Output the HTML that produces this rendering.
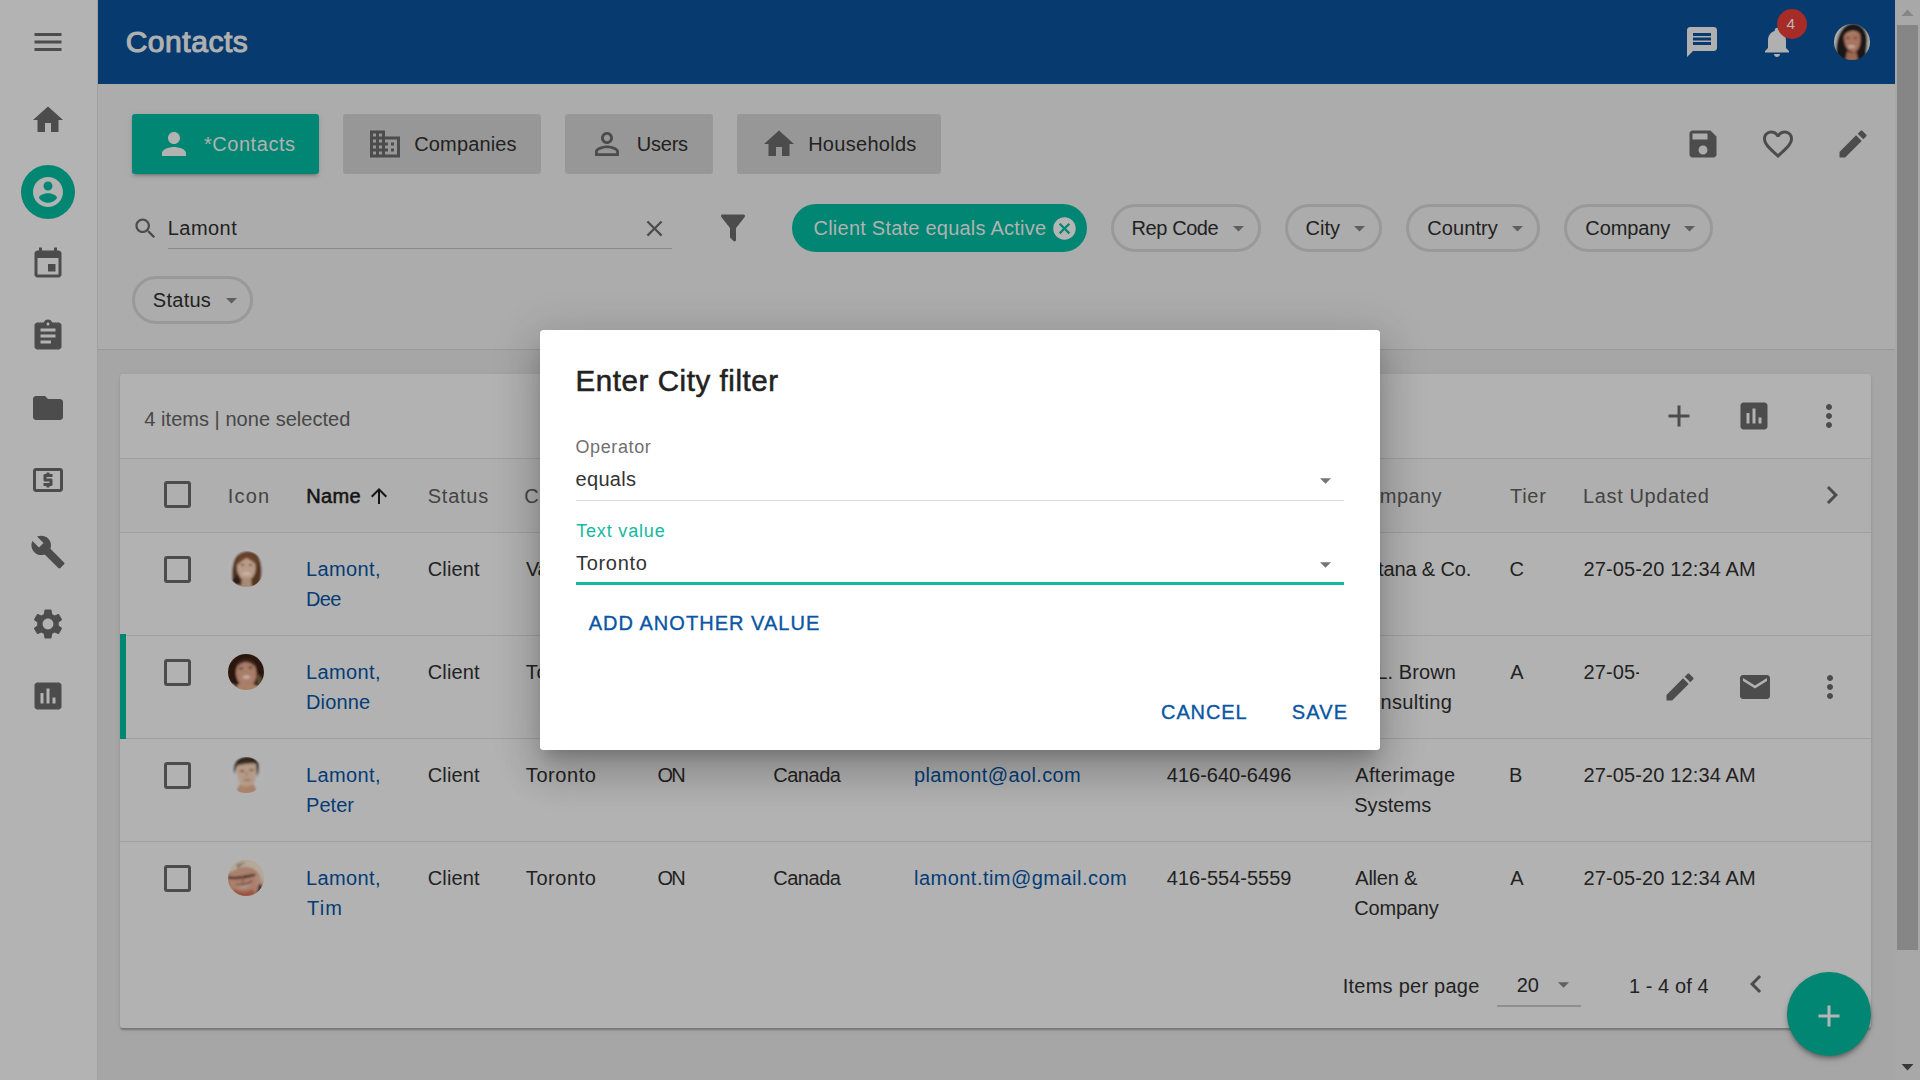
<!DOCTYPE html>
<html lang="en"><head><meta charset="utf-8"><title>Contacts</title>
<style>
html,body{margin:0;padding:0;}
body{width:1920px;height:1080px;overflow:hidden;position:relative;background:#a6a6a6;font-family:"Liberation Sans",sans-serif;}
.b{position:absolute;}
.ic{position:absolute;display:block;overflow:visible;}
.t{position:absolute;white-space:nowrap;}
</style></head><body>
<div class="b" style="left:0px;top:0px;width:96.5px;height:1080px;background:#b3b3b3;border-right:1.5px solid #a0a0a0;"></div>
<svg class="ic" style="left:30px;top:24px;width:36px;height:36px;" viewBox="0 0 24 24"><path fill="#4c4c4c" d="M3 18h18v-2H3v2zm0-5h18v-2H3v2zm0-7v2h18V6H3z"/></svg>
<svg class="ic" style="left:30px;top:102px;width:36px;height:36px;" viewBox="0 0 24 24"><path fill="#4c4c4c" d="M10 20v-6h4v6h5v-8h3L12 3 2 12h3v8z"/></svg>
<div class="b" style="left:21px;top:165px;width:54px;height:54px;background:#008672;border-radius:50%;"></div>
<svg class="ic" style="left:30px;top:174px;width:36px;height:36px;" viewBox="0 0 24 24"><path fill="#b2b2b2" d="M12 2C6.48 2 2 6.48 2 12s4.48 10 10 10 10-4.48 10-10S17.52 2 12 2zm0 3c1.66 0 3 1.34 3 3s-1.34 3-3 3-3-1.34-3-3 1.34-3 3-3zm0 14.2c-2.5 0-4.71-1.28-6-3.22.03-1.99 4-3.08 6-3.08 1.99 0 5.97 1.09 6 3.08-1.29 1.94-3.5 3.22-6 3.22z"/></svg>
<svg class="ic" style="left:30px;top:246px;width:36px;height:36px;" viewBox="0 0 24 24"><path fill="#4c4c4c" d="M17 12h-5v5h5v-5zM16 1v2H8V1H6v2H5c-1.11 0-1.99.9-1.99 2L3 19c0 1.1.89 2 2 2h14c1.1 0 2-.9 2-2V5c0-1.1-.9-2-2-2h-1V1h-2zm3 18H5V8h14v11z"/></svg>
<svg class="ic" style="left:30px;top:318px;width:36px;height:36px;" viewBox="0 0 24 24"><path fill="#4c4c4c" d="M19 3h-4.18C14.4 1.84 13.3 1 12 1c-1.3 0-2.4.84-2.82 2H5c-1.1 0-2 .9-2 2v14c0 1.1.9 2 2 2h14c1.1 0 2-.9 2-2V5c0-1.1-.9-2-2-2zm-7 0c.55 0 1 .45 1 1s-.45 1-1 1-1-.45-1-1 .45-1 1-1zm2 14H7v-2h7v2zm3-4H7v-2h10v2zm0-4H7V7h10v2z"/></svg>
<svg class="ic" style="left:30px;top:390px;width:36px;height:36px;" viewBox="0 0 24 24"><path fill="#4c4c4c" d="M10 4H4c-1.1 0-1.99.9-1.99 2L2 18c0 1.1.9 2 2 2h16c1.1 0 2-.9 2-2V8c0-1.1-.9-2-2-2h-8l-2-2z"/></svg>
<svg class="ic" style="left:30px;top:462px;width:36px;height:36px;" viewBox="0 0 24 24"><path fill="#4c4c4c" d="M11 17h2v-1h1c.55 0 1-.45 1-1v-3c0-.55-.45-1-1-1h-3v-1h4V8h-2V7h-2v1h-1c-.55 0-1 .45-1 1v3c0 .55.45 1 1 1h3v1H9v2h2v1zm9-13H4c-1.11 0-1.99.89-1.99 2L2 18c0 1.11.89 2 2 2h16c1.11 0 2-.89 2-2V6c0-1.11-.89-2-2-2zm0 14H4V6h16v12z"/></svg>
<svg class="ic" style="left:30px;top:534px;width:36px;height:36px;" viewBox="0 0 24 24"><path fill="#4c4c4c" d="M22.7 19l-9.1-9.1c.9-2.3.4-5-1.5-6.9-2-2-5-2.4-7.4-1.3L9 6 6 9 1.6 4.7C.4 7.1.9 10.1 2.9 12.1c1.9 1.9 4.6 2.4 6.9 1.5l9.1 9.1c.4.4 1 .4 1.4 0l2.3-2.3c.5-.4.5-1.1.1-1.4z"/></svg>
<svg class="ic" style="left:30px;top:606px;width:36px;height:36px;" viewBox="0 0 24 24"><path fill="#4c4c4c" d="M19.14 12.94c.04-.3.06-.61.06-.94 0-.32-.02-.64-.07-.94l2.03-1.58c.18-.14.23-.41.12-.61l-1.92-3.32c-.12-.22-.37-.29-.59-.22l-2.39.96c-.5-.38-1.03-.7-1.62-.94l-.36-2.54c-.04-.24-.24-.41-.48-.41h-3.84c-.24 0-.43.17-.47.41l-.36 2.54c-.59.24-1.13.57-1.62.94l-2.39-.96c-.22-.08-.47 0-.59.22L2.74 8.87c-.12.21-.08.47.12.61l2.03 1.58c-.05.3-.09.63-.09.94s.02.64.07.94l-2.03 1.58c-.18.14-.23.41-.12.61l1.92 3.32c.12.22.37.29.59.22l2.39-.96c.5.38 1.03.7 1.62.94l.36 2.54c.05.24.24.41.48.41h3.84c.24 0 .44-.17.47-.41l.36-2.54c.59-.24 1.13-.56 1.62-.94l2.39.96c.22.08.47 0 .59-.22l1.92-3.32c.12-.22.07-.47-.12-.61l-2.01-1.58zM12 15.6c-1.98 0-3.6-1.62-3.6-3.6s1.62-3.6 3.6-3.6 3.6 1.62 3.6 3.6-1.62 3.6-3.6 3.6z"/></svg>
<svg class="ic" style="left:30px;top:678px;width:36px;height:36px;" viewBox="0 0 24 24"><path fill="#4c4c4c" d="M19 3H5c-1.1 0-2 .9-2 2v14c0 1.1.9 2 2 2h14c1.1 0 2-.9 2-2V5c0-1.1-.9-2-2-2zM9 17H7v-7h2v7zm4 0h-2V7h2v10zm4 0h-2v-4h2v4z"/></svg>
<div class="b" style="left:98px;top:84px;width:1797px;height:265px;background:#acacac;"></div>
<div class="b" style="left:98px;top:0px;width:1797px;height:84px;background:#073b6f;"></div>
<span class="t" id="t0" style="left:125.66px;top:19.11px;font-size:30px;line-height:45px;color:#b0b0b0;letter-spacing:0.539px;-webkit-text-stroke:1.1px #b0b0b0;">Contacts</span>
<svg class="ic" style="left:1683.7px;top:24px;width:36px;height:36px;" viewBox="0 0 24 24"><path fill="#b0b0b0" d="M20 2H4c-1.1 0-1.99.9-1.99 2L2 22l4-4h14c1.1 0 2-.9 2-2V4c0-1.1-.9-2-2-2zm-2 12H6v-2h12v2zm0-3H6V9h12v2zm0-3H6V6h12v2z"/></svg>
<svg class="ic" style="left:1758.5px;top:24px;width:36px;height:36px;" viewBox="0 0 24 24"><path fill="#b0b0b0" d="M12 22c1.1 0 2-.9 2-2h-4c0 1.1.89 2 2 2zm6-6v-5c0-3.07-1.64-5.64-4.5-6.32V4c0-.83-.67-1.5-1.5-1.5s-1.5.67-1.5 1.5v.68C7.63 5.36 6 7.92 6 11v5l-2 2v1h16v-1l-2-2z"/></svg>
<div class="b" style="left:1777px;top:9px;width:30px;height:30px;background:#a72b27;border-radius:50%;"></div>
<span class="t" id="t1" style="left:1786.45px;top:12.13px;font-size:15.5px;line-height:23px;color:#b8b8b8;">4</span>
<svg class="ic" style="left:1834px;top:23.9px;width:36px;height:36px" viewBox="0 0 36 36"><defs><clipPath id="cA"><circle cx="18" cy="18" r="18"/></clipPath></defs><g clip-path="url(#cA)"><g filter="url(#bl)"><rect x="-4" y="-4" width="44" height="44" fill="#b2b0a8"/><path d="M4.500 40C0 27 2 9 12 1.500c8-5 18-1 20.500 9 2 8-1 15 0 20l-4 10z" fill="#1b1414"/><path d="M10.500 10c2-6 12-7 15-1 2 6 1 14-3 18-3 2-7 1-9-2-3-4-4-10-3-15z" fill="#a8755e"/><path d="M13 7c4-2 9-1 11 2-4-1-8-1-11 2z" fill="#b88c78"/><path d="M9 12c1-8 14-11 18-1-4-5-11-6-18 1z" fill="#1b1414"/><path d="M13 27c2 2 7 2 9 0l3 13H11z" fill="#9c6852"/><ellipse cx="17.500" cy="22.500" rx="3.500" ry="1.300" fill="#c8b0a6"/><ellipse cx="14" cy="14" rx="1.800" ry=".8" fill="#3a2620"/><ellipse cx="21.500" cy="14" rx="1.800" ry=".8" fill="#3a2620"/></g></g></svg>
<div class="b" style="left:132px;top:114px;width:187px;height:60px;background:#008672;border-radius:3px;box-shadow:0 4.5px 1.5px -3px rgba(0,0,0,.13),0 3px 3px 0 rgba(0,0,0,.09),0 1.5px 7.5px 0 rgba(0,0,0,.08);"></div>
<svg class="ic" style="left:156.25px;top:126px;width:36px;height:36px;" viewBox="0 0 24 24"><path fill="#b2b2b2" d="M12 12c2.21 0 4-1.79 4-4s-1.79-4-4-4-4 1.79-4 4 1.79 4 4 4zm0 2c-2.67 0-8 1.34-8 4v2h16v-2c0-2.66-5.33-4-8-4z"/></svg>
<span class="t" id="t2" style="left:203.92px;top:128.87px;font-size:20px;line-height:30px;color:#b2b2b2;letter-spacing:0.555px;">*Contacts</span>
<div class="b" style="left:343px;top:114px;width:198px;height:60px;background:#979797;border-radius:3px;"></div>
<svg class="ic" style="left:366.5px;top:126px;width:36px;height:36px;" viewBox="0 0 24 24"><path fill="#4c4c4c" d="M12 7V3H2v18h20V7H12zM6 19H4v-2h2v2zm0-4H4v-2h2v2zm0-4H4V9h2v2zm0-4H4V5h2v2zm4 12H8v-2h2v2zm0-4H8v-2h2v2zm0-4H8V9h2v2zm0-4H8V5h2v2zm10 12h-8v-2h2v-2h-2v-2h2v-2h-2V9h8v10zm-2-8h-2v2h2v-2zm0 4h-2v2h2v-2z"/></svg>
<span class="t" id="t3" style="left:414.25px;top:128.87px;font-size:20px;line-height:30px;color:#222;letter-spacing:0.150px;">Companies</span>
<div class="b" style="left:565px;top:114px;width:148px;height:60px;background:#979797;border-radius:3px;"></div>
<svg class="ic" style="left:588.5px;top:126px;width:36px;height:36px;" viewBox="0 0 24 24"><path fill="#4c4c4c" d="M12 5.9c1.16 0 2.1.94 2.1 2.1s-.94 2.1-2.1 2.1S9.9 9.16 9.9 8s.94-2.1 2.1-2.1m0 9c2.97 0 6.1 1.46 6.1 2.1v1.1H5.9V17c0-.64 3.13-2.1 6.1-2.1M12 4C9.79 4 8 5.79 8 8s1.79 4 4 4 4-1.79 4-4-1.79-4-4-4zm0 9c-2.67 0-8 1.34-8 4v3h16v-3c0-2.66-5.33-4-8-4z"/></svg>
<span class="t" id="t4" style="left:636.87px;top:128.87px;font-size:20px;line-height:30px;color:#222;letter-spacing:-0.259px;">Users</span>
<div class="b" style="left:737px;top:114px;width:204px;height:60px;background:#979797;border-radius:3px;"></div>
<svg class="ic" style="left:761px;top:126px;width:36px;height:36px;" viewBox="0 0 24 24"><path fill="#4c4c4c" d="M10 20v-6h4v6h5v-8h3L12 3 2 12h3v8z"/></svg>
<span class="t" id="t5" style="left:808.15px;top:128.87px;font-size:20px;line-height:30px;color:#222;letter-spacing:0.288px;">Households</span>
<svg class="ic" style="left:1685px;top:126px;width:36px;height:36px;" viewBox="0 0 24 24"><path fill="#4c4c4c" d="M17 3H5c-1.11 0-2 .9-2 2v14c0 1.1.89 2 2 2h14c1.1 0 2-.9 2-2V7l-4-4zm-5 16c-1.66 0-3-1.34-3-3s1.34-3 3-3 3 1.34 3 3-1.34 3-3 3zm3-10H5V5h10v4z"/></svg>
<svg class="ic" style="left:1760px;top:126px;width:36px;height:36px;" viewBox="0 0 24 24"><path fill="#4c4c4c" d="M16.5 3c-1.74 0-3.41.81-4.5 2.09C10.91 3.81 9.24 3 7.5 3 4.42 3 2 5.42 2 8.5c0 3.78 3.4 6.86 8.55 11.54L12 21.35l1.45-1.32C18.6 15.36 22 12.28 22 8.5 22 5.42 19.58 3 16.5 3zm-4.4 15.55l-.1.1-.1-.1C7.14 14.24 4 11.39 4 8.5 4 6.5 5.5 5 7.5 5c1.54 0 3.04.99 3.57 2.36h1.87C13.46 5.99 14.96 5 16.5 5c2 0 3.5 1.5 3.5 3.5 0 2.89-3.14 5.74-7.9 10.05z"/></svg>
<svg class="ic" style="left:1835.3px;top:126px;width:36px;height:36px;" viewBox="0 0 24 24"><path fill="#4c4c4c" d="M3 17.25V21h3.75L17.81 9.94l-3.75-3.75L3 17.25zM20.71 7.04c.39-.39.39-1.02 0-1.41l-2.34-2.34c-.39-.39-1.02-.39-1.41 0l-1.83 1.83 3.75 3.75 1.83-1.83z"/></svg>
<svg class="ic" style="left:131.7px;top:214.9px;width:27px;height:27px;" viewBox="0 0 24 24"><path fill="#4c4c4c" d="M15.5 14h-.79l-.28-.27C15.41 12.59 16 11.11 16 9.5 16 5.91 13.09 3 9.5 3S3 5.91 3 9.5 5.91 16 9.5 16c1.61 0 3.09-.59 4.23-1.57l.27.28v.79l5 4.99L20.49 19l-4.99-5zm-6 0C7.01 14 5 11.99 5 9.5S7.01 5 9.5 5 14 7.01 14 9.5 11.99 14 9.5 14z"/></svg>
<span class="t" id="t6" style="left:167.75px;top:212.57px;font-size:20px;line-height:30px;color:#222;letter-spacing:0.446px;">Lamont</span>
<div class="b" style="left:168px;top:247.5px;width:504px;height:1.5px;background:#8a8a8a;"></div>
<svg class="ic" style="left:640.5px;top:215px;width:27px;height:27px;" viewBox="0 0 24 24"><path fill="#4c4c4c" d="M19 6.41L17.59 5 12 10.59 6.41 5 5 6.41 10.59 12 5 17.59 6.41 19 12 13.41 17.59 19 19 17.59 13.41 12z"/></svg>
<svg class="ic" style="left:715px;top:210px;width:36px;height:36px;" viewBox="0 0 24 24"><path fill="#4c4c4c" d="M14,12V19.88C14.04,20.18 13.94,20.5 13.71,20.71C13.32,21.1 12.69,21.1 12.3,20.71L10.29,18.7C10.06,18.47 9.96,18.16 10,17.87V12H9.97L4.21,4.62C3.87,4.19 3.95,3.56 4.38,3.22C4.57,3.08 4.78,3 5,3V3H19V3C19.22,3 19.43,3.08 19.62,3.22C20.05,3.56 20.13,4.19 19.79,4.62L14.03,12H14Z"/></svg>
<div class="b" style="left:792px;top:204px;width:295px;height:48px;background:#008672;border-radius:24px;"></div>
<span class="t" id="t7" style="left:813.51px;top:213.07px;font-size:20px;line-height:30px;color:#b2b2b2;letter-spacing:0.231px;">Client State equals Active</span>
<svg class="ic" style="left:1051.1px;top:215px;width:27px;height:27px;" viewBox="0 0 24 24"><path fill="#b5b5b5" d="M12 2C6.47 2 2 6.47 2 12s4.47 10 10 10 10-4.47 10-10S17.53 2 12 2zm5 13.59L15.59 17 12 13.41 8.41 17 7 15.59 10.59 12 7 8.41 8.41 7 12 10.59 15.59 7 17 8.41 13.41 12 17 15.59z"/></svg>
<div class="b" style="left:1111px;top:204px;width:150px;height:48px;border:3px solid #999;border-radius:24px;box-sizing:border-box;"></div><span class="t" id="t8" style="left:1131.56px;top:213.07px;font-size:20px;line-height:30px;color:#222;letter-spacing:-0.416px;">Rep Code</span><svg class="ic" style="left:1232.9px;top:226px;width:11px;height:5.500px" viewBox="0 0 10 5"><path d="M0 0l5 5 5-5z" fill="#5f5f5f"/></svg>
<div class="b" style="left:1285px;top:204px;width:96.5px;height:48px;border:3px solid #999;border-radius:24px;box-sizing:border-box;"></div><span class="t" id="t9" style="left:1305.62px;top:213.07px;font-size:20px;line-height:30px;color:#222;letter-spacing:-0.009px;">City</span><svg class="ic" style="left:1354.3px;top:226px;width:11px;height:5.500px" viewBox="0 0 10 5"><path d="M0 0l5 5 5-5z" fill="#5f5f5f"/></svg>
<div class="b" style="left:1406px;top:204px;width:133.5px;height:48px;border:3px solid #999;border-radius:24px;box-sizing:border-box;"></div><span class="t" id="t10" style="left:1427.37px;top:213.07px;font-size:20px;line-height:30px;color:#222;letter-spacing:0.062px;">Country</span><svg class="ic" style="left:1512.3px;top:226px;width:11px;height:5.500px" viewBox="0 0 10 5"><path d="M0 0l5 5 5-5z" fill="#5f5f5f"/></svg>
<div class="b" style="left:1564px;top:204px;width:149px;height:48px;border:3px solid #999;border-radius:24px;box-sizing:border-box;"></div><span class="t" id="t11" style="left:1585.37px;top:213.07px;font-size:20px;line-height:30px;color:#222;letter-spacing:-0.132px;">Company</span><svg class="ic" style="left:1684.3px;top:226px;width:11px;height:5.500px" viewBox="0 0 10 5"><path d="M0 0l5 5 5-5z" fill="#5f5f5f"/></svg>
<div class="b" style="left:132px;top:276px;width:120.5px;height:48px;border:3px solid #999;border-radius:24px;box-sizing:border-box;"></div><span class="t" id="t12" style="left:152.86px;top:285.07px;font-size:20px;line-height:30px;color:#222;letter-spacing:0.250px;">Status</span><svg class="ic" style="left:225.5px;top:298px;width:11px;height:5.500px" viewBox="0 0 10 5"><path d="M0 0l5 5 5-5z" fill="#5f5f5f"/></svg>
<div class="b" style="left:98px;top:348.5px;width:1797px;height:1.5px;background:#989898;"></div>
<div class="b" style="left:120px;top:374px;width:1751px;height:654px;background:#b2b2b2;border-radius:3px;box-shadow:0 3px 1.5px -1.5px rgba(0,0,0,.14),0 1.5px 1.5px 0 rgba(0,0,0,.1),0 1.5px 4.5px 0 rgba(0,0,0,.08);"></div>
<span class="t" id="t13" style="left:144.33px;top:403.57px;font-size:20px;line-height:30px;color:#474747;letter-spacing:0.032px;">4 items | none selected</span>
<svg class="ic" style="left:1661px;top:398px;width:36px;height:36px;" viewBox="0 0 24 24"><path fill="#4c4c4c" d="M19 13h-6v6h-2v-6H5v-2h6V5h2v6h6v2z"/></svg>
<svg class="ic" style="left:1736px;top:398px;width:36px;height:36px;" viewBox="0 0 24 24"><path fill="#4c4c4c" d="M19 3H5c-1.1 0-2 .9-2 2v14c0 1.1.9 2 2 2h14c1.1 0 2-.9 2-2V5c0-1.1-.9-2-2-2zM9 17H7v-7h2v7zm4 0h-2V7h2v10zm4 0h-2v-4h2v4z"/></svg>
<svg class="ic" style="left:1811px;top:398px;width:36px;height:36px;" viewBox="0 0 24 24"><path fill="#4c4c4c" d="M12 8c1.1 0 2-.9 2-2s-.9-2-2-2-2 .9-2 2 .9 2 2 2zm0 2c-1.1 0-2 .9-2 2s.9 2 2 2 2-.9 2-2-.9-2-2-2zm0 6c-1.1 0-2 .9-2 2s.9 2 2 2 2-.9 2-2-.9-2-2-2z"/></svg>
<div class="b" style="left:120px;top:459px;width:1751px;height:73px;background:#afafaf;"></div>
<div class="b" style="left:120px;top:458px;width:1751px;height:1px;background:#9f9f9f;"></div>
<div class="b" style="left:120px;top:532px;width:1751px;height:1px;background:#9f9f9f;"></div>
<div class="b" style="left:120px;top:635px;width:1751px;height:1px;background:#9f9f9f;"></div>
<div class="b" style="left:120px;top:738px;width:1751px;height:1px;background:#9f9f9f;"></div>
<div class="b" style="left:120px;top:841px;width:1751px;height:1px;background:#9f9f9f;"></div>
<div class="b" style="left:163.5px;top:481.2px;width:27px;height:27px;border:3px solid #4c4c4c;border-radius:3px;box-sizing:border-box;"></div>
<span class="t" id="t14" style="left:227.78px;top:481.07px;font-size:20px;line-height:30px;color:#444;letter-spacing:1.218px;">Icon</span>
<span class="t" id="t15" style="left:306.21px;top:481.07px;font-size:20px;line-height:30px;color:#151515;letter-spacing:0.376px;-webkit-text-stroke:0.55px #151515;">Name</span>
<svg class="ic" style="left:366.9px;top:484px;width:24px;height:24px;" viewBox="0 0 24 24"><path fill="#151515" d="M4 12l1.41 1.41L11 7.83V20h2V7.83l5.58 5.59L20 12l-8-8-8 8z"/></svg>
<span class="t" id="t16" style="left:427.71px;top:481.07px;font-size:20px;line-height:30px;color:#444;letter-spacing:0.767px;">Status</span>
<span class="t" id="t17" style="left:524.34px;top:481.07px;font-size:20px;line-height:30px;color:#444;letter-spacing:0.811px;">City</span>
<span class="t" id="t18" style="left:655.95px;top:481.07px;font-size:20px;line-height:30px;color:#444;letter-spacing:0.765px;">Prov</span>
<span class="t" id="t19" style="left:772.34px;top:481.07px;font-size:20px;line-height:30px;color:#444;letter-spacing:0.809px;">Country</span>
<span class="t" id="t20" style="left:912.95px;top:481.07px;font-size:20px;line-height:30px;color:#444;letter-spacing:0.596px;">Email</span>
<span class="t" id="t21" style="left:1165.03px;top:481.07px;font-size:20px;line-height:30px;color:#444;letter-spacing:0.554px;">Phone</span>
<span class="t" id="t22" style="left:1353.34px;top:481.07px;font-size:20px;line-height:30px;color:#444;letter-spacing:0.449px;">Company</span>
<span class="t" id="t23" style="left:1509.98px;top:481.07px;font-size:20px;line-height:30px;color:#444;letter-spacing:0.722px;">Tier</span>
<span class="t" id="t24" style="left:1583.07px;top:481.07px;font-size:20px;line-height:30px;color:#444;letter-spacing:0.618px;">Last Updated</span>
<svg class="ic" style="left:1813.5px;top:477.4px;width:36px;height:36px;" viewBox="0 0 24 24"><path fill="#4c4c4c" d="M10 6L8.59 7.41 13.17 12l-4.58 4.59L10 18l6-6z"/></svg>
<div class="b" style="left:163.5px;top:555.8px;width:27px;height:27px;border:3px solid #4c4c4c;border-radius:3px;box-sizing:border-box;"></div>
<span class="t" id="t25" style="left:306.01px;top:554.07px;font-size:20px;line-height:30px;color:#043c76;letter-spacing:0.363px;">Lamont,</span>
<span class="t" id="t26" style="left:306.01px;top:584.07px;font-size:20px;line-height:30px;color:#043c76;letter-spacing:-0.618px;">Dee</span>
<span class="t" id="t27" style="left:427.73px;top:554.07px;font-size:20px;line-height:30px;color:#222;letter-spacing:0.163px;">Client</span>
<span class="t" id="t28" style="left:525.98px;top:554.07px;font-size:20px;line-height:30px;color:#222;letter-spacing:-0.295px;">Vancouver</span>
<span class="t" id="t29" style="left:656.64px;top:554.07px;font-size:20px;line-height:30px;color:#222;letter-spacing:-1.020px;">BC</span>
<span class="t" id="t30" style="left:773.20px;top:554.07px;font-size:20px;line-height:30px;color:#222;letter-spacing:-0.454px;">Canada</span>
<span class="t" id="t31" style="left:914.48px;top:554.07px;font-size:20px;line-height:30px;color:#043c76;letter-spacing:0.669px;">dlamont@katana.com</span>
<span class="t" id="t32" style="left:1166.20px;top:554.07px;font-size:20px;line-height:30px;color:#222;letter-spacing:0.071px;">604-555-0142</span>
<span class="t" id="t33" style="left:1353.86px;top:554.07px;font-size:20px;line-height:30px;color:#222;letter-spacing:-0.140px;">Katana &amp; Co.</span>
<span class="t" id="t34" style="left:1509.48px;top:554.07px;font-size:20px;line-height:30px;color:#222;">C</span>
<span class="t" id="t35" style="left:1583.42px;top:554.07px;font-size:20px;line-height:30px;color:#222;letter-spacing:0.132px;">27-05-20 12:34 AM</span>
<div class="b" style="left:120px;top:634px;width:6px;height:104.5px;background:#008672;"></div>
<div class="b" style="left:163.5px;top:658.8px;width:27px;height:27px;border:3px solid #4c4c4c;border-radius:3px;box-sizing:border-box;"></div>
<span class="t" id="t36" style="left:306.01px;top:657.07px;font-size:20px;line-height:30px;color:#043c76;letter-spacing:0.363px;">Lamont,</span>
<span class="t" id="t37" style="left:306.01px;top:687.07px;font-size:20px;line-height:30px;color:#043c76;letter-spacing:0.146px;">Dionne</span>
<span class="t" id="t38" style="left:427.73px;top:657.07px;font-size:20px;line-height:30px;color:#222;letter-spacing:0.163px;">Client</span>
<span class="t" id="t39" style="left:525.85px;top:657.07px;font-size:20px;line-height:30px;color:#222;letter-spacing:0.559px;">Toronto</span>
<span class="t" id="t40" style="left:657.38px;top:657.07px;font-size:20px;line-height:30px;color:#222;letter-spacing:-1.742px;">ON</span>
<span class="t" id="t41" style="left:773.20px;top:657.07px;font-size:20px;line-height:30px;color:#222;letter-spacing:-0.454px;">Canada</span>
<span class="t" id="t42" style="left:914.48px;top:657.07px;font-size:20px;line-height:30px;color:#043c76;letter-spacing:-0.768px;">dionne@mlbrown.com</span>
<span class="t" id="t43" style="left:1166.85px;top:657.07px;font-size:20px;line-height:30px;color:#222;letter-spacing:-0.009px;">416-555-0188</span>
<span class="t" id="t44" style="left:1353.86px;top:657.07px;font-size:20px;line-height:30px;color:#222;letter-spacing:0.090px;">M.L. Brown</span>
<span class="t" id="t45" style="left:1354.32px;top:687.07px;font-size:20px;line-height:30px;color:#222;letter-spacing:0.333px;">Consulting</span>
<span class="t" id="t46" style="left:1510.34px;top:657.07px;font-size:20px;line-height:30px;color:#222;">A</span>
<span class="t" id="t47" style="left:1583.42px;top:657.07px;font-size:20px;line-height:30px;color:#222;letter-spacing:0.132px;">27-05-20 12:34 AM</span>
<div class="b" style="left:163.5px;top:761.8px;width:27px;height:27px;border:3px solid #4c4c4c;border-radius:3px;box-sizing:border-box;"></div>
<span class="t" id="t48" style="left:306.01px;top:760.07px;font-size:20px;line-height:30px;color:#043c76;letter-spacing:0.363px;">Lamont,</span>
<span class="t" id="t49" style="left:306.01px;top:790.07px;font-size:20px;line-height:30px;color:#043c76;letter-spacing:0.043px;">Peter</span>
<span class="t" id="t50" style="left:427.73px;top:760.07px;font-size:20px;line-height:30px;color:#222;letter-spacing:0.163px;">Client</span>
<span class="t" id="t51" style="left:525.85px;top:760.07px;font-size:20px;line-height:30px;color:#222;letter-spacing:0.559px;">Toronto</span>
<span class="t" id="t52" style="left:657.38px;top:760.07px;font-size:20px;line-height:30px;color:#222;letter-spacing:-1.742px;">ON</span>
<span class="t" id="t53" style="left:773.20px;top:760.07px;font-size:20px;line-height:30px;color:#222;letter-spacing:-0.454px;">Canada</span>
<span class="t" id="t54" style="left:913.99px;top:760.07px;font-size:20px;line-height:30px;color:#043c76;letter-spacing:0.375px;">plamont@aol.com</span>
<span class="t" id="t55" style="left:1166.85px;top:760.07px;font-size:20px;line-height:30px;color:#222;letter-spacing:-0.009px;">416-640-6496</span>
<span class="t" id="t56" style="left:1355.29px;top:760.07px;font-size:20px;line-height:30px;color:#222;letter-spacing:0.345px;">Afterimage</span>
<span class="t" id="t57" style="left:1354.21px;top:790.07px;font-size:20px;line-height:30px;color:#222;letter-spacing:0.043px;">Systems</span>
<span class="t" id="t58" style="left:1508.93px;top:760.07px;font-size:20px;line-height:30px;color:#222;">B</span>
<span class="t" id="t59" style="left:1583.42px;top:760.07px;font-size:20px;line-height:30px;color:#222;letter-spacing:0.132px;">27-05-20 12:34 AM</span>
<div class="b" style="left:163.5px;top:864.8px;width:27px;height:27px;border:3px solid #4c4c4c;border-radius:3px;box-sizing:border-box;"></div>
<span class="t" id="t60" style="left:306.01px;top:863.07px;font-size:20px;line-height:30px;color:#043c76;letter-spacing:0.363px;">Lamont,</span>
<span class="t" id="t61" style="left:307.04px;top:893.07px;font-size:20px;line-height:30px;color:#043c76;letter-spacing:1.122px;">Tim</span>
<span class="t" id="t62" style="left:427.73px;top:863.07px;font-size:20px;line-height:30px;color:#222;letter-spacing:0.163px;">Client</span>
<span class="t" id="t63" style="left:525.85px;top:863.07px;font-size:20px;line-height:30px;color:#222;letter-spacing:0.559px;">Toronto</span>
<span class="t" id="t64" style="left:657.38px;top:863.07px;font-size:20px;line-height:30px;color:#222;letter-spacing:-1.742px;">ON</span>
<span class="t" id="t65" style="left:773.20px;top:863.07px;font-size:20px;line-height:30px;color:#222;letter-spacing:-0.454px;">Canada</span>
<span class="t" id="t66" style="left:914.04px;top:863.07px;font-size:20px;line-height:30px;color:#043c76;letter-spacing:0.472px;">lamont.tim@gmail.com</span>
<span class="t" id="t67" style="left:1166.85px;top:863.07px;font-size:20px;line-height:30px;color:#222;letter-spacing:0.003px;">416-554-5559</span>
<span class="t" id="t68" style="left:1355.29px;top:863.07px;font-size:20px;line-height:30px;color:#222;letter-spacing:-0.231px;">Allen &amp;</span>
<span class="t" id="t69" style="left:1354.32px;top:893.07px;font-size:20px;line-height:30px;color:#222;letter-spacing:-0.206px;">Company</span>
<span class="t" id="t70" style="left:1510.34px;top:863.07px;font-size:20px;line-height:30px;color:#222;">A</span>
<span class="t" id="t71" style="left:1583.42px;top:863.07px;font-size:20px;line-height:30px;color:#222;letter-spacing:0.132px;">27-05-20 12:34 AM</span>
<div class="b" style="left:1639px;top:640px;width:232px;height:96px;background:#b2b2b2;"></div>
<svg class="ic" style="left:1662px;top:669px;width:36px;height:36px;" viewBox="0 0 24 24"><path fill="#4c4c4c" d="M3 17.25V21h3.75L17.81 9.94l-3.75-3.75L3 17.25zM20.71 7.04c.39-.39.39-1.02 0-1.41l-2.34-2.34c-.39-.39-1.02-.39-1.41 0l-1.83 1.83 3.75 3.75 1.83-1.83z"/></svg>
<svg class="ic" style="left:1737px;top:669px;width:36px;height:36px;" viewBox="0 0 24 24"><path fill="#4c4c4c" d="M20 4H4c-1.1 0-1.99.9-1.99 2L2 18c0 1.1.9 2 2 2h16c1.1 0 2-.9 2-2V6c0-1.1-.9-2-2-2zm0 4l-8 5-8-5V6l8 5 8-5v2z"/></svg>
<svg class="ic" style="left:1812px;top:669px;width:36px;height:36px;" viewBox="0 0 24 24"><path fill="#4c4c4c" d="M12 8c1.1 0 2-.9 2-2s-.9-2-2-2-2 .9-2 2 .9 2 2 2zm0 2c-1.1 0-2 .9-2 2s.9 2 2 2 2-.9 2-2-.9-2-2-2zm0 6c-1.1 0-2 .9-2 2s.9 2 2 2 2-.9 2-2-.9-2-2-2z"/></svg>
<svg width="0" height="0" style="position:absolute"><defs><filter id="bl" x="-10%" y="-10%" width="120%" height="120%"><feGaussianBlur stdDeviation="0.9"/></filter></defs></svg>
<svg class="ic" style="left:228px;top:550.8px;width:36px;height:36px" viewBox="0 0 36 36"><defs><clipPath id="c0"><circle cx="18" cy="18" r="18"/></clipPath></defs><g clip-path="url(#c0)"><g filter="url(#bl)"><rect x="-4" y="-4" width="44" height="44" fill="#b4b4b4"/><path d="M7 34C2 30 4 12 8 6c4-6 14-8 20-3 6 5 6 18 5 24-1 6-4 9-8 10z" fill="#55351f"/><path d="M3 30c2-2 5-3 7-8l2 10c-3 2-7 1-9-2z" fill="#2c1a12"/><path d="M10 10c2-5 12-7 16-1 3 6 2 14-2 18-3 3-8 3-11 0-4-4-5-11-3-17z" fill="#b89c88"/><path d="M12 3c6-3 14-1 17 5 1 3 1 6 0 8-2-5-6-6-10-9-3 1-6 3-9 7 0-4 0-8 2-11z" fill="#6a4228"/><path d="M14 27h9l1 10H13z" fill="#a98a74"/><ellipse cx="18.500" cy="22.500" rx="4" ry="1.500" fill="#c9b3ac"/><ellipse cx="14.500" cy="14" rx="1.800" ry=".8" fill="#4a3428"/><ellipse cx="22.500" cy="14" rx="1.800" ry=".8" fill="#4a3428"/></g></g></svg>
<svg class="ic" style="left:228px;top:653.8px;width:36px;height:36px" viewBox="0 0 36 36"><defs><clipPath id="c1"><circle cx="18" cy="18" r="18"/></clipPath></defs><g clip-path="url(#c1)"><g filter="url(#bl)"><rect x="-4" y="-4" width="44" height="44" fill="#3a2218"/><path d="M0 40V14C3 3 11-1 19 0c9 0 16 6 17 16l1 24z" fill="#2c1810"/><path d="M28 20c3 0 7 4 7 9l-4 5c-2-4-3-9-3-14z" fill="#5a4a30"/><path d="M9 13c2-6 14-7 18-1 2 5 2 12-1 17-3 4-10 5-14 1-4-5-5-12-3-17z" fill="#a97d68"/><path d="M7 14C9 5 17 3 23 5c4 2 6 6 6 10-3-4-7-7-12-7-4 1-7 3-10 6z" fill="#3a2116"/><path d="M9 31c3-2 7-2 9-1h6c3 0 6 2 8 5l-4 6H8z" fill="#a88068"/><path d="M4 30c2 1 4 3 5 6l-3 2c-2-2-3-5-2-8z" fill="#b5aca6"/><ellipse cx="18.500" cy="23.500" rx="4.500" ry="2.200" fill="#b58f88"/><ellipse cx="18.500" cy="22.800" rx="3.200" ry="1" fill="#d0c0ba"/><ellipse cx="13" cy="14.500" rx="2" ry=".9" fill="#4a2e24"/><ellipse cx="22.500" cy="13.500" rx="2" ry=".9" fill="#4a2e24"/></g></g></svg>
<svg class="ic" style="left:228px;top:756.8px;width:36px;height:36px" viewBox="0 0 36 36"><defs><clipPath id="c2"><circle cx="18" cy="18" r="18"/></clipPath></defs><g clip-path="url(#c2)"><g filter="url(#bl)"><rect x="-4" y="-4" width="44" height="44" fill="#b3b3b3"/><path d="M6.500 17C4 8 8 1 17-.5c9-1 14 4 14 10 0 4-1 8-2 10L28 8H9z" fill="#33271f"/><path d="M9 8c3-3 15-4 19-1 1 6 0 14-2 19-2 4-11 4-14 0-3-5-4-12-3-18z" fill="#b59a87"/><path d="M12 27c3 3 10 3 13 0l3 4v10H9V32z" fill="#a98368"/><path d="M8.500 9c4-5 14-6 20-2-5-1-14 0-20 2z" fill="#4a3a2c"/><ellipse cx="14" cy="14" rx="2.300" ry=".9" fill="#6a5546"/><ellipse cx="23.500" cy="13" rx="2.300" ry=".9" fill="#6a5546"/><ellipse cx="19" cy="23" rx="3.800" ry="1.100" fill="#9a7468"/><path d="M17.500 14l2 0 .8 5-3.500 .2z" fill="#a88c78"/></g></g></svg>
<svg class="ic" style="left:228px;top:859.8px;width:36px;height:36px" viewBox="0 0 36 36"><defs><clipPath id="c3"><circle cx="18" cy="18" r="18"/></clipPath></defs><g clip-path="url(#c3)"><g filter="url(#bl)"><rect x="-4" y="-4" width="44" height="44" fill="#a87c68"/><path d="M-2 14C2 4 10-2 20-1c10 1 17 9 18 18l-3 8c-2-6-3-11-8-15-6-4-14-4-19 0z" fill="#b5a999"/><path d="M8 5c3-2 7-3 10-2-3 1-6 3-8 6z" fill="#8a7a68"/><path d="M4 12c6-4 16-5 22-1 3 3 4 8 4 12l-3 8c-4 6-14 7-20 2-5-5-6-14-3-21z" fill="#ab806c"/><path d="M5 28c5 4 13 5 19 1l4 5-6 6H8z" fill="#9c5644"/><path d="M28 16c3-1 5 1 5 5s-2 8-4 9c-1-4-1-9-1-14z" fill="#ad8a78"/><path d="M31 24c3 0 4 4 3 9l-6 4z" fill="#3a2620"/><path d="M0 16.500l8 .5 6-1 7-1.200 6-1v2l-6 1.700-7 1.200-6 .6-8-.5z" fill="#3a2a24"/><ellipse cx="10" cy="17.500" rx="2.500" ry="1.300" fill="#5a3e34"/><ellipse cx="20" cy="16" rx="2.500" ry="1.300" fill="#5a3e34"/><path d="M9 24c4 2 10 1 14-2-1 4-4 6-8 6-3 0-5-1-6-4z" fill="#b49a90"/><path d="M8 23.500c4 1.500 11 .5 16-3l.5 1c-5 4-12 5-16.500 3z" fill="#6a3a30"/><path d="M-1 21c2 4 2 8 4 11l-4 3z" fill="#3a2018"/><path d="M13 17c1 2 1 4 0 6l3 .5c0-2-1-4-1-6.500z" fill="#94624f"/></g></g></svg>
<span class="t" id="t72" style="left:1342.74px;top:971.07px;font-size:20px;line-height:30px;color:#222;letter-spacing:0.247px;">Items per page</span>
<span class="t" id="t73" style="left:1516.79px;top:970.07px;font-size:20px;line-height:30px;color:#222;letter-spacing:-0.248px;">20</span>
<svg class="ic" style="left:1557.8px;top:982px;width:11px;height:6px" viewBox="0 0 10 5"><path d="M0 0l5 5 5-5z" fill="#5f5f5f"/></svg>
<div class="b" style="left:1497px;top:1005px;width:84px;height:1.5px;background:#8f8f8f;"></div>
<span class="t" id="t74" style="left:1628.90px;top:971.07px;font-size:20px;line-height:30px;color:#222;letter-spacing:0.082px;">1 - 4 of 4</span>
<svg class="ic" style="left:1737.7px;top:965.8px;width:36px;height:36px;" viewBox="0 0 24 24"><path fill="#4c4c4c" d="M15.41 7.41L14 6l-6 6 6 6 1.41-1.41L10.83 12z"/></svg>
<div class="b" style="left:1787px;top:972px;width:84px;height:84px;background:#008672;border-radius:50%;box-shadow:0 3px 4px -1px rgba(0,0,0,.35),0 4px 7px 0 rgba(0,0,0,.12);"></div>
<svg class="ic" style="left:1811px;top:998px;width:36px;height:36px;" viewBox="0 0 24 24"><path fill="#b5b5b5" d="M19 13h-6v6h-2v-6H5v-2h6V5h2v6h6v2z"/></svg>
<div class="b" style="left:1895px;top:0px;width:25px;height:1080px;background:#a8a8a8;"></div>
<div class="b" style="left:1897px;top:25px;width:21px;height:925px;background:#868686;"></div>
<svg class="ic" style="left:1895px;top:0;width:25px;height:25px" viewBox="0 0 25 25"><path d="M6.500 16l6-6.500 6 6.500z" fill="#868686"/></svg>
<svg class="ic" style="left:1895px;top:1055px;width:25px;height:25px" viewBox="0 0 25 25"><path d="M6.500 9l6 6.500 6-6.500z" fill="#383838"/></svg>
<div class="b" style="left:540px;top:330px;width:840px;height:420px;background:#fff;border-radius:3.500px;box-shadow:0 11px 15px -7px rgba(0,0,0,.2),0 24px 38px 3px rgba(0,0,0,.14),0 9px 46px 8px rgba(0,0,0,.12);"></div>
<span class="t" id="t75" style="left:575.52px;top:358.58px;font-size:29.5px;line-height:44px;color:#222;letter-spacing:0.570px;-webkit-text-stroke:0.55px #222;">Enter City filter</span>
<span class="t" id="t76" style="left:575.49px;top:433.86px;font-size:18px;line-height:27px;color:#707070;letter-spacing:0.620px;">Operator</span>
<span class="t" id="t77" style="left:575.53px;top:463.67px;font-size:20px;line-height:30px;color:#333;letter-spacing:0.322px;">equals</span>
<svg class="ic" style="left:1320.3px;top:477.7px;width:11px;height:6px" viewBox="0 0 10 5"><path d="M0 0l5 5 5-5z" fill="#757575"/></svg>
<div class="b" style="left:576px;top:499.5px;width:768px;height:1.5px;background:#dcdcdc;"></div>
<span class="t" id="t78" style="left:576.19px;top:517.66px;font-size:18px;line-height:27px;color:#14b8a0;letter-spacing:0.831px;">Text value</span>
<span class="t" id="t79" style="left:576.11px;top:548.07px;font-size:20px;line-height:30px;color:#333;letter-spacing:0.659px;">Toronto</span>
<svg class="ic" style="left:1320.3px;top:562px;width:11px;height:6px" viewBox="0 0 10 5"><path d="M0 0l5 5 5-5z" fill="#757575"/></svg>
<div class="b" style="left:576px;top:582px;width:768px;height:3px;background:#12b89f;"></div>
<span class="t" id="t80" style="left:588.67px;top:607.87px;font-size:20px;line-height:30px;color:#0a56a3;letter-spacing:1.035px;-webkit-text-stroke:0.35px #0a56a3;">ADD ANOTHER VALUE</span>
<span class="t" id="t81" style="left:1161.11px;top:697.27px;font-size:20px;line-height:30px;color:#0a56a3;letter-spacing:0.861px;-webkit-text-stroke:0.35px #0a56a3;">CANCEL</span>
<span class="t" id="t82" style="left:1291.66px;top:697.27px;font-size:20px;line-height:30px;color:#0a56a3;letter-spacing:1.158px;-webkit-text-stroke:0.35px #0a56a3;">SAVE</span>
</body></html>
